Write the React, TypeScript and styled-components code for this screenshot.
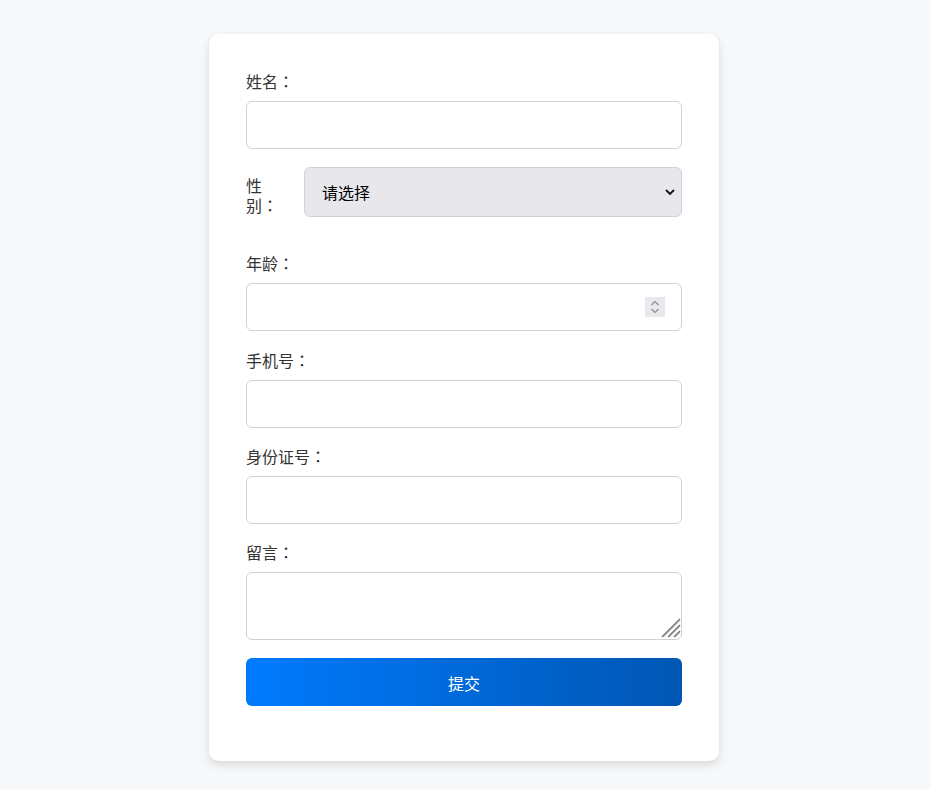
import React from 'react';
import styled, { createGlobalStyle } from 'styled-components';

const GlobalStyle = createGlobalStyle`
  html, body {
    margin: 0;
    padding: 0;
    background: #f7f8fa;
    font-family: "Noto Sans CJK SC", "Noto Sans", sans-serif;
  }
  * {
    box-sizing: border-box;
  }
`;

const Page = styled.div`
  padding: 34px 2px 28px 0;
`;

const Card = styled.form`
  width: 510px;
  margin: 0 auto;
  background: #ffffff;
  border-radius: 10px;
  box-shadow: 0 4px 10px rgba(0, 0, 0, 0.12);
  padding: 39px 37px 55px;
  display: flex;
  flex-direction: column;
`;

const Group = styled.div<{ $gap?: number }>`
  display: flex;
  flex-direction: column;
  margin-bottom: ${(p) => p.$gap ?? 20}px;
`;

const InlineGroup = styled.div`
  display: flex;
  align-items: center;
  margin-bottom: 38px;
`;

const Label = styled.label`
  font-size: 16px;
  line-height: 16px;
  color: #333333;
  margin-bottom: 12px;
`;

const InlineLabel = styled(Label)`
  width: 38px;
  line-height: 20px;
  flex-shrink: 0;
  margin: 6px 20px 0 0;
`;

// full-width colon drawn centred, as in the reference
const Colon = styled.span`
  font-family: "Noto Sans CJK TC", "Noto Sans CJK SC", sans-serif;
`;

const Field = styled.div`
  position: relative;
  flex: 1;
  display: flex;
`;

const Input = styled.input`
  height: 48px;
  width: 100%;
  border: 1px solid #d1d1d6;
  border-radius: 6px;
  padding: 0 12px;
  font-size: 16px;
  font-family: inherit;
  background: #ffffff;
  outline: none;
  appearance: textfield;
  -moz-appearance: textfield;

  &::-webkit-inner-spin-button,
  &::-webkit-outer-spin-button {
    -webkit-appearance: none;
    margin: 0;
  }
`;

const Select = styled.select`
  width: 100%;
  height: 50px;
  border: 1px solid #d1d1d6;
  border-radius: 6px;
  padding: 0 36px 0 17px;
  font-size: 16px;
  font-family: inherit;
  color: #000000;
  background-color: #e8e7ec;
  outline: none;
  appearance: none;
  -webkit-appearance: none;
`;

const Chevron = styled.svg`
  position: absolute;
  right: 7px;
  top: 20px;
  width: 10px;
  height: 10px;
  pointer-events: none;
`;

const Spinner = styled.div`
  position: absolute;
  right: 17px;
  top: 14px;
  width: 20px;
  height: 20px;
  background: #e9e9ed;
  display: flex;
  align-items: center;
  justify-content: center;
  pointer-events: none;
`;

const TextArea = styled.textarea`
  height: 68px;
  width: 100%;
  border: 1px solid #d1d1d6;
  border-radius: 6px;
  padding: 10px 12px;
  font-size: 16px;
  font-family: inherit;
  outline: none;
  resize: none;
  display: block;
`;

const Grip = styled.svg`
  position: absolute;
  right: 1px;
  bottom: 2px;
  width: 20px;
  height: 20px;
  pointer-events: none;
`;

const SubmitButton = styled.button`
  height: 48px;
  width: 100%;
  border: none;
  border-radius: 6px;
  background: linear-gradient(to right, #007bff, #0056b3);
  color: #ffffff;
  font-size: 16px;
  font-family: inherit;
  padding-top: 2px;
  cursor: pointer;
`;

const FieldLabel = ({ htmlFor, text }: { htmlFor: string; text: string }) => (
  <Label htmlFor={htmlFor}>
    {text}
    <Colon>：</Colon>
  </Label>
);

export default function App() {
  return (
    <Page>
      <GlobalStyle />
      <Card onSubmit={(e) => e.preventDefault()}>
        <Group $gap={18}>
          <FieldLabel htmlFor="name" text="姓名" />
          <Input id="name" type="text" />
        </Group>
        <InlineGroup>
          <InlineLabel htmlFor="gender">
            性别<Colon>：</Colon>
          </InlineLabel>
          <Field>
            <Select id="gender" defaultValue="">
              <option value="">请选择</option>
              <option value="male">男</option>
              <option value="female">女</option>
            </Select>
            <Chevron viewBox="0 0 10 10">
              <path
                d="M1 3 L5 7 L9 3"
                fill="none"
                stroke="#111"
                strokeWidth="1.8"
              />
            </Chevron>
          </Field>
        </InlineGroup>
        <Group $gap={21}>
          <FieldLabel htmlFor="age" text="年龄" />
          <Field>
            <Input id="age" type="number" />
            <Spinner>
              <svg width="10" height="16" viewBox="0 0 10 16">
                <path
                  d="M1.5 6 L5 2.5 L8.5 6 M1.5 10 L5 13.5 L8.5 10"
                  fill="none"
                  stroke="#8c8c94"
                  strokeWidth="1.2"
                />
              </svg>
            </Spinner>
          </Field>
        </Group>
        <Group>
          <FieldLabel htmlFor="phone" text="手机号" />
          <Input id="phone" type="tel" />
        </Group>
        <Group>
          <FieldLabel htmlFor="idcard" text="身份证号" />
          <Input id="idcard" type="text" />
        </Group>
        <Group $gap={18}>
          <FieldLabel htmlFor="message" text="留言" />
          <Field>
            <TextArea id="message" />
            <Grip viewBox="0 0 20 20">
              <path
                d="M19 1 L1 19 M19 7 L7 19 M19 13 L13 19"
                stroke="#707070"
                strokeWidth="1.5"
              />
              <path
                d="M19 3 L3 19 M19 9 L9 19 M19 15 L15 19"
                stroke="#cfcfcf"
                strokeWidth="0.8"
              />
            </Grip>
          </Field>
        </Group>
        <SubmitButton type="submit">提交</SubmitButton>
      </Card>
    </Page>
  );
}
